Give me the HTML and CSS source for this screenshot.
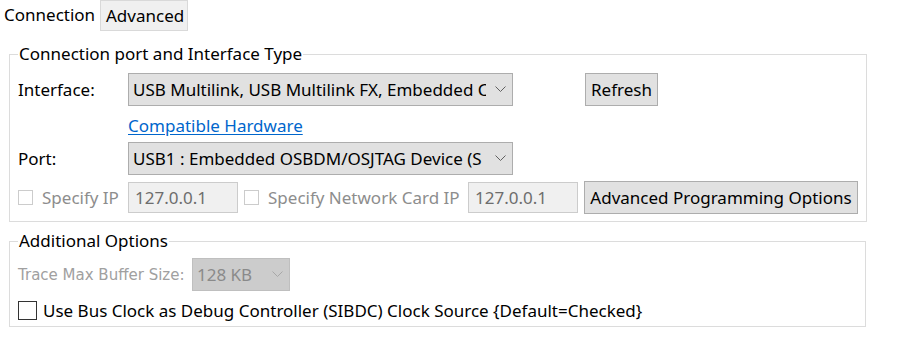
FILE: index.html
```html
<!DOCTYPE html>
<html>
<head>
	<meta charset="UTF-8">
	<title>Connection</title>
	<link rel="stylesheet" href="styles.css">
</head>
<body>
	<div class="tabs">
		<div class="tab tab-on">Connection</div>
		<div class="tab tab-off">Advanced</div>
	</div>

	<fieldset class="group group-conn">
		<legend>Connection port and Interface Type</legend>
		<div class="row">
			<span class="lbl">Interface:</span>
			<div class="combo combo-wide">
				<span class="combo-text">USB Multilink, USB Multilink FX, Embedded C</span>
				<svg class="chev" width="11" height="7" viewBox="0 0 11 7"><polyline points="0.5,0.5 5.5,5.5 10.5,0.5" fill="none" stroke="#606060" stroke-width="1"/></svg>
			</div>
			<button class="btn btn-refresh">Refresh</button>
		</div>
		<div class="row row-link">
			<a class="link" href="#">Compatible Hardware</a>
		</div>
		<div class="row">
			<span class="lbl">Port:</span>
			<div class="combo combo-wide">
				<span class="combo-text">USB1 : Embedded OSBDM/OSJTAG Device (S</span>
				<svg class="chev" width="11" height="7" viewBox="0 0 11 7"><polyline points="0.5,0.5 5.5,5.5 10.5,0.5" fill="none" stroke="#606060" stroke-width="1"/></svg>
			</div>
		</div>
		<div class="row row-ip">
			<label class="chk chk-ip"><span class="box box-off"></span><span class="dim">Specify IP</span></label>
			<div class="field">127.0.0.1</div>
			<label class="chk chk-card"><span class="box box-off"></span><span class="dim">Specify Network Card IP</span></label>
			<div class="field">127.0.0.1</div>
			<button class="btn btn-adv">Advanced Programming Options</button>
		</div>
	</fieldset>

	<fieldset class="group group-opts">
		<legend>Additional Options</legend>
		<div class="row row-trace">
			<span class="trace-lbl">Trace Max Buffer Size:</span>
			<div class="combo combo-off">
				<span class="combo-text">128 KB</span>
				<svg class="chev" width="11" height="7" viewBox="0 0 11 7"><polyline points="0.5,0.5 5.5,5.5 10.5,0.5" fill="none" stroke="#a8a8a8" stroke-width="1"/></svg>
			</div>
		</div>
		<div class="row row-clock">
			<label class="chk"><span class="box box-on"></span><span>Use Bus Clock as Debug Controller (SIBDC) Clock Source {Default=Checked}</span></label>
		</div>
	</fieldset>
</body>
</html>
```

FILE: styles.css
```css
*{
	box-sizing:border-box;
}

body{
	margin:0;
	background:#fff;
	color:#000;
	font-family:"Noto Sans","Open Sans",sans-serif;
	font-size:17px;
}

/* tabs */
.tabs{
	display:flex;
	height:31px;
}

.tab{
	height:31px;
	line-height:29px;
}

.tab-on{
	padding:0 6px 0 4px;
	width:100px;
}

.tab-off{
	width:88px;
	padding-left:5px;
	background:#f0f0f0;
	border:1px solid #d9d9d9;
}

/* group boxes */
.group{
	margin:12px 0 0 9px;
	width:857px;
	border:1px solid #dcdcdc;
	padding:0 8px;
}

.group legend{
	padding:0 1px;
	line-height:22px;
}

.group-conn{
	padding-top:8px;
	padding-bottom:7px;
}

.group-opts{
	margin-top:8px;
	padding-top:6px;
	padding-bottom:1px;
}

.row{
	display:flex;
	align-items:center;
	height:33px;
}

.lbl{
	width:110px;
}

.row-link{
	height:36px;
	padding:3px 0 0 110px;
}

.link{
	color:#0066cc;
	text-decoration:underline;
	text-underline-offset:2px;
}

.row-ip{
	margin-top:6px;
}

/* combo box */
.combo{
	display:flex;
	align-items:center;
	height:33px;
	background:#e1e1e1;
	border:1px solid #adadad;
	padding:0 5px 0 4px;
}

.combo-wide{
	width:385px;
}

.combo-text{
	flex:1;
	white-space:nowrap;
	overflow:hidden;
	margin-right:9px;
}

.chev{
	flex:none;
	margin-right:1px;
}

.combo-off{
	width:98px;
	background:#cccccc;
	border-color:#bfbfbf;
	color:#8a8a8a;
}

/* buttons */
.btn{
	font:inherit;
	color:#000;
	background:#e1e1e1;
	border:1px solid #adadad;
	height:33px;
	padding:0;
}

.btn-refresh{
	margin-left:72px;
	width:73px;
}

.btn-adv{
	width:274px;
	margin-left:6px;
}

/* checkboxes */
.chk{
	display:flex;
	align-items:center;
}

.box{
	display:inline-block;
	flex:none;
	background:#fff;
}

.box-off{
	width:15px;
	height:15px;
	border:1px solid #cccccc;
	margin-right:9px;
}

.box-on{
	width:19px;
	height:19px;
	border:1px solid #333;
	margin-right:6px;
}

.chk-ip{
	width:110px;
}

.chk-card{
	width:224px;
	margin-left:6px;
}

.dim{
	color:#8d8d8d;
}

.field{
	width:110px;
	height:31px;
	line-height:29px;
	padding-left:6px;
	background:#f0f0f0;
	border:1px solid #cccccc;
	color:#6d6d6d;
}

/* additional options */
.trace-lbl{
	width:174px;
	font-family:"DejaVu Sans",sans-serif;
	font-size:15px;
	color:#a0a0a0;
}

.row-trace{
	height:33px;
}

.row-clock{
	margin-top:4px;
	height:30px;
}
```
